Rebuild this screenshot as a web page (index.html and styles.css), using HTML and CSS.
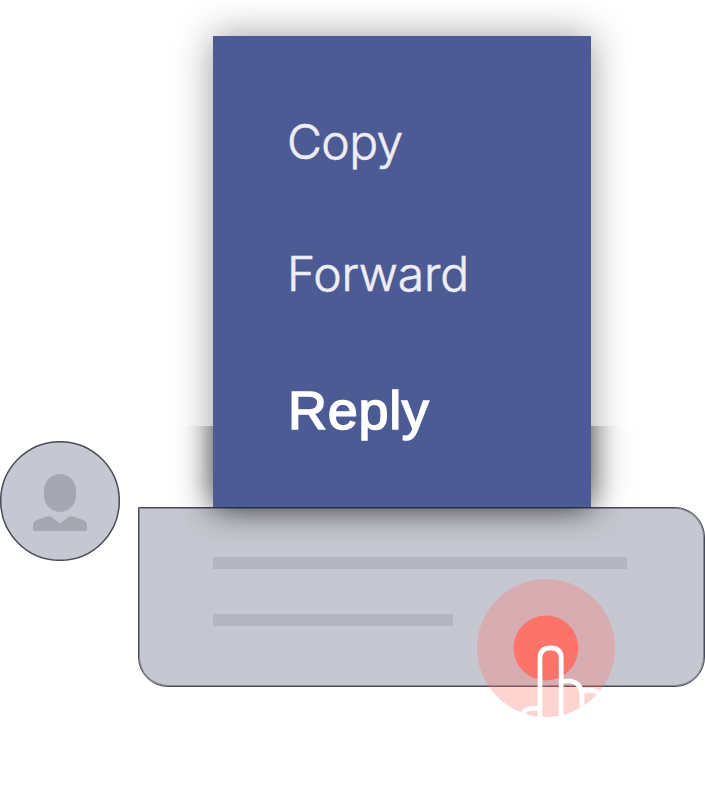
FILE: index.html
```html
<!DOCTYPE html>
<html lang="en">
<head>
<meta charset="utf-8">
<title>Message actions</title>
<link rel="stylesheet" href="styles.css">
</head>
<body>
<main class="scene">
  <nav class="menu">
    <span class="item">Copy</span>
    <span class="item forward">Forward</span>
    <span class="item reply">Reply</span>
  </nav>
  <section class="message">
    <svg class="avatar" viewBox="0 0 120 120">
      <circle cx="60" cy="60" r="59.3" fill="#c7c7d1" stroke="#474a58" stroke-width="1.5"/>
      <rect x="44" y="33" width="32" height="38" rx="16" ry="16" fill="#a5a8b1"/>
      <path d="M33 84 Q33 81 36 79.5 L45 76 Q50 74 53 77 L60 82.5 L67 77 Q70 74 75 76 L84 79.5 Q87 81 87 84 V88 Q87 90 85 90 H35 Q33 90 33 88Z" fill="#a5a8b1"/>
    </svg>
    <div class="bubble">
      <div class="line"></div>
      <div class="line short"></div>
    </div>
  </section>
  <div class="shadow upper"></div>
  <div class="shadow lower"></div>
  <svg class="touch" viewBox="477 579 138 138">
    <defs><clipPath id="ring"><circle cx="546" cy="648" r="69"/></clipPath></defs>
    <circle cx="546" cy="648" r="69" fill="#fb7369" fill-opacity=".31"/>
    <circle cx="546" cy="648" r="32.4" fill="#fc7469"/>
    <g clip-path="url(#ring)" fill="none" stroke="#fff" stroke-width="4.8">
      <path d="M540 720V658Q540 647.8 550.6 647.8Q561.2 647.8 561.2 658V720"/>
      <path d="M561 682.5C573 678 582 684 582 696V712"/>
      <path d="M582 691.5C590 689 597 690 602 696"/>
      <path d="M540 708.3H533Q525 708.3 522 715"/>
    </g>
  </svg>
</main>
</body>
</html>
```
FILE: styles.css
```css
body { margin: 0; background: #fff; }
.scene { position: relative; width: 705px; height: 798px; overflow: hidden; display: flex; flex-direction: column; }
.menu {
  box-sizing: border-box;
  width: 378px;
  height: 471px;
  margin: 36px 0 0 213px;
  padding: 76px 0 0 74px;
  background: #4d5b95;
  display: flex;
  flex-direction: column;
  flex-shrink: 0;
  font-family: Inter, sans-serif;
  position: relative;
  z-index: 2;
}
.item { font-size: 48px; line-height: 60px; height: 132px; font-weight: 300; color: #ededf3; letter-spacing: -.6px; -webkit-text-stroke: .6px #ededf3; }
.forward { letter-spacing: -.2px; height: 134px; }
.reply { font-family: "Liberation Sans", Arial, sans-serif; font-size: 54px; line-height: 64px; height: 64px; font-weight: 400; color: #fff; letter-spacing: .7px; margin-left: 1px; -webkit-text-stroke: 1.6px #fff; }
.message { display: flex; align-items: flex-start; gap: 18px; }
.avatar { width: 120px; height: 120px; margin-top: -66px; flex-shrink: 0; }
.bubble {
  box-sizing: border-box;
  width: 567px;
  height: 180px;
  padding: 49px 0 0 74px;
  background: #c7c7d1;
  border: 1px solid #474a58;
  box-shadow: inset 0 0 0 1px rgba(71, 74, 88, .5);
  border-radius: 0 30px 30px 30px;
}
.line { width: 414px; height: 12px; margin-bottom: 45px; background: #b5b5bf; }
.line.short { width: 240px; }
.shadow { position: absolute; left: 213px; top: 36px; width: 378px; height: 471px; }
.upper { box-shadow: 0 0 36px rgba(0, 0, 0, .4); clip-path: inset(-36px -50px 81px -50px); }
.lower { box-shadow: 0 0 32px rgba(0, 0, 0, .84); clip-path: inset(390px -50px -50px -50px); }
.touch { position: absolute; left: 477px; top: 579px; width: 138px; height: 138px; }
```
